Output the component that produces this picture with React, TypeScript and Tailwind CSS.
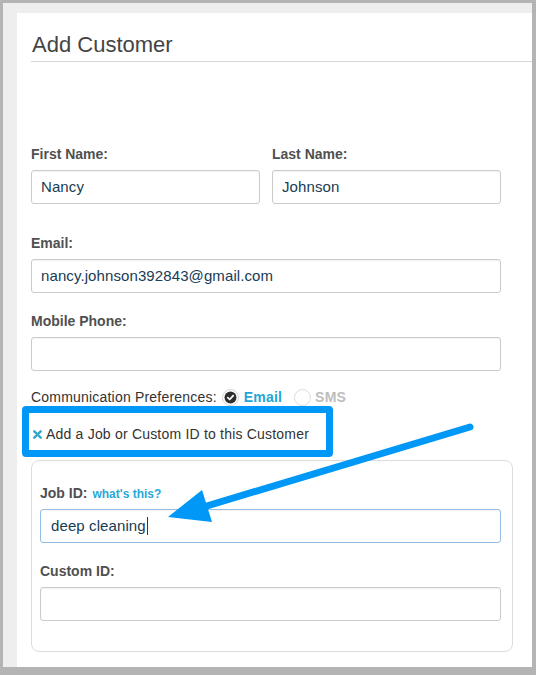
import React from "react";

function Label({ children }: { children: React.ReactNode }) {
  return (
    <div className="text-[14px] leading-[20px] font-bold text-[#505050]">
      {children}
    </div>
  );
}

function Field({
  value,
  focused,
  caret,
}: {
  value?: string;
  focused?: boolean;
  caret?: boolean;
}) {
  return (
    <div
      className={
        focused
          ? "mt-[6px] flex h-[34px] items-center rounded-[3px] border border-[#93bde2] bg-white px-[10px] text-[15px] tracking-[0.1px] text-[#173c55] shadow-[inset_0_1px_1px_rgba(0,0,0,0.05)]"
          : "mt-[6px] flex h-[34px] items-center rounded-[3px] border border-[#cbcbcb] bg-white px-[9px] text-[15px] tracking-[0.1px] text-[#173c55] shadow-[inset_0_1px_1px_rgba(0,0,0,0.05)]"
      }
    >
      <span>{value}</span>
      {caret && <span className="ml-[1px] inline-block h-[18px] w-[1px] bg-[#173c55]" />}
    </div>
  );
}

function CheckedRadio() {
  return (
    <svg width="17" height="17" viewBox="0 0 17 17">
      <circle cx="8.5" cy="8.5" r="8" fill="#fff" stroke="#d4d4d4" />
      <circle cx="8.5" cy="8.5" r="6" fill="#2e2e2e" />
      <path
        d="M5.8 8.7 L7.7 10.5 L11.2 6.6"
        fill="none"
        stroke="#fff"
        strokeWidth="1.7"
        strokeLinecap="round"
        strokeLinejoin="round"
      />
    </svg>
  );
}

function EmptyRadio() {
  return (
    <svg width="17" height="17" viewBox="0 0 17 17">
      <circle cx="8.5" cy="8.5" r="8" fill="#fff" stroke="#dcdcdc" />
    </svg>
  );
}

export default function App() {
  return (
    <div className="relative min-h-[675px] w-[536px] bg-[#b4b4b4] pt-[3px] pr-[4px] pb-[4px] pl-[3px] font-['Liberation_Sans',Arial,sans-serif]">
      <div className="bg-[#eeeeee] pt-[10px] pl-[14px]">
        <div className="bg-white pl-[14px] pb-[15px]">
          <h1 className="border-b border-[#d6d6d6] pt-[18px] pb-[2px] pl-[1px] text-[22px] leading-[28px] font-normal text-[#444]">
            Add Customer
          </h1>

          <div className="mr-[31px]">
            <div className="mt-[82px] grid grid-cols-2 gap-[12px]">
              <div>
                <Label>First Name:</Label>
                <Field value="Nancy" />
              </div>
              <div>
                <Label>Last Name:</Label>
                <Field value="Johnson" />
              </div>
            </div>

            <div className="mt-[29px]">
              <Label>Email:</Label>
              <Field value="nancy.johnson392843@gmail.com" />
            </div>

            <div className="mt-[18px]">
              <Label>Mobile Phone:</Label>
              <Field />
            </div>

            <div className="mt-[16px] flex h-[20px] items-center text-[14px] tracking-[0.2px] text-[#333]">
              <span>Communication Preferences:</span>
              <span className="ml-[5px] flex items-center">
                <CheckedRadio />
              </span>
              <span className="ml-[5px] font-bold text-[#1fa6d6]">Email</span>
              <span className="ml-[12px] flex items-center">
                <EmptyRadio />
              </span>
              <span className="ml-[4px] font-bold text-[#bdbdbd]">SMS</span>
            </div>

            <div className="relative mt-[17px] flex h-[20px] items-center text-[14px] tracking-[0.2px] text-[#333]">
              <svg width="9" height="9" viewBox="0 0 9 9" className="ml-[2px]">
                <path
                  d="M1.3 1.3 L7.7 7.7 M7.7 1.3 L1.3 7.7"
                  stroke="#35a7cc"
                  strokeWidth="2.4"
                  strokeLinecap="round"
                />
              </svg>
              <span className="ml-[4px]">Add a Job or Custom ID to this Customer</span>
              <div className="pointer-events-none absolute top-[-18px] left-[-9px] h-[51px] w-[311px] rounded-[4px] border-[7px] border-[#0098f6]" />
            </div>
          </div>

          <div className="mt-[16px] mr-[19px] rounded-[8px] border border-[#dcdcdc] pt-[22px] pr-[11px] pb-[30px] pl-[8px]">
            <div className="flex h-[20px] items-baseline">
              <Label>Job ID:</Label>
              <span className="ml-[5px] text-[12px] font-bold text-[#2ba8d6]">what's this?</span>
            </div>
            <div className="mt-[2px]">
              <Field value="deep cleaning" focused caret />
            </div>

            <div className="mt-[18px]">
              <Label>Custom ID:</Label>
              <div className="mt-[1px]">
                <Field />
              </div>
            </div>
          </div>
        </div>
      </div>

      <svg
        className="pointer-events-none absolute top-0 left-0"
        width="536"
        height="675"
        viewBox="0 0 536 675"
      >
        <line
          x1="470"
          y1="427"
          x2="200"
          y2="508"
          stroke="#0098f6"
          strokeWidth="7"
          strokeLinecap="round"
        />
        <polygon points="168,517 202,490 212,522" fill="#0098f6" />
      </svg>
    </div>
  );
}
